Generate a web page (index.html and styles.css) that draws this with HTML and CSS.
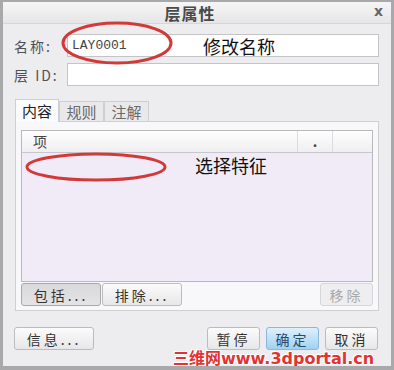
FILE: index.html
```html
<!DOCTYPE html>
<html lang="zh-CN">
<head>
  <meta charset="UTF-8" />
  <title>层属性</title>
  <link rel="stylesheet" href="styles.css">
</head>
<body>
  <div class="dialog">
    <div class="titlebar">
      <span class="title">层属性</span>
      <span class="close">x</span>
    </div>

    <div class="body">
      <div class="field">
        <label>名称:</label>
        <div class="input mono">LAY0001</div>
      </div>
      <div class="field">
        <label>层 ID:</label>
        <div class="input"></div>
      </div>

      <div class="tabs">
        <div class="tab active">内容</div>
        <div class="tab">规则</div>
        <div class="tab">注解</div>
      </div>
      <div class="panel">
        <div class="list">
          <div class="list-head">
            <div class="col col-item">项</div>
            <div class="col col-dot">.</div>
            <div class="col col-rest"></div>
          </div>
          <div class="list-rows"></div>
        </div>
        <div class="panel-buttons">
          <button class="btn pressed">包括...</button>
          <button class="btn">排除...</button>
          <span class="spacer"></span>
          <button class="btn disabled small">移除</button>
        </div>
      </div>

      <div class="footer">
        <button class="btn">信息...</button>
        <span class="spacer"></span>
        <button class="btn small">暂停</button>
        <button class="btn small primary">确定</button>
        <button class="btn small">取消</button>
      </div>
    </div>

    <!-- annotations drawn over the screenshot -->
    <svg class="marks" width="394" height="370" viewBox="0 0 394 370">
      <ellipse cx="117" cy="43" rx="54" ry="20" fill="none" stroke="#d23a3a" stroke-width="3"/>
      <ellipse cx="96" cy="167" rx="69" ry="13" fill="none" stroke="#d23a3a" stroke-width="3"/>
    </svg>
    <span class="note note-name">修改名称</span>
    <span class="note note-feat">选择特征</span>
    <span class="watermark">三维网www.3dportal.cn</span>
  </div>
</body>
</html>
```

FILE: styles.css
```css
body {
  margin: 0;
  background: #fff;
  font-family: "Noto Sans CJK SC", "Noto Sans", sans-serif;
}
.dialog {
  position: relative;
  width: 394px;
  height: 370px;
  box-sizing: border-box;
  border: 3px solid #a9a9ab;
  border-top-width: 2px;
  border-bottom-width: 4px;
  background: #ededf0;
  overflow: hidden;
}
.titlebar {
  height: 21px;
  display: flex;
  align-items: center;
  justify-content: center;
  position: relative;
  background: linear-gradient(#f6f6f6, #e6e6e8);
  border-bottom: 1px solid #d6d6d8;
}
.title {
  font-size: 16px;
  font-weight: bold;
  color: #4a4a4a;
  margin-right: 14px;
  letter-spacing: 1px;
}
.close {
  position: absolute;
  right: 8px;
  top: 1px;
  font-family: "DejaVu Sans", sans-serif;
  font-weight: bold;
  font-size: 14px;
  color: #666;
}
.body {
  padding: 10px 11px 0 11px;
}
.field {
  display: flex;
  align-items: center;
  height: 23px;
  margin-bottom: 6px;
}
.field label {
  width: 53px;
  font-size: 14px;
  color: #505050;
  letter-spacing: 2px;
}
.input {
  flex: 1;
  height: 21px;
  background: #fff;
  border: 1px solid #c4c4c6;
  margin-right: 1px;
  font-size: 13px;
  line-height: 21px;
  padding-left: 4px;
  color: #444;
}
.mono {
  font-family: "Liberation Mono", monospace;
}
.tabs {
  display: flex;
  margin-top: 13px;
  margin-left: 1px;
  height: 22px;
}
.tab {
  width: 45px;
  box-sizing: border-box;
  border: 1px solid #cfcfd2;
  border-bottom: none;
  background: #e9e9ec;
  font-size: 15px;
  color: #6a6a6a;
  text-align: center;
  line-height: 20px;
  margin-top: 2px;
}
.tab.active {
  width: 44px;
  background: #fbfbfd;
  color: #222;
  margin-top: 0;
  line-height: 22px;
  position: relative;
  z-index: 1;
  height: 23px;
}
.panel {
  margin-left: 1px;
  margin-right: 1px;
  height: 190px;
  box-sizing: border-box;
  background: #f8f8fa;
  border: 1px solid #cfcfd2;
  padding: 8px 5px 0 5px;
}
.list {
  height: 152px;
  box-sizing: border-box;
  border: 1px solid #b9b9bc;
  background: #f0ebf6;
  display: flex;
  flex-direction: column;
}
.list-head {
  display: flex;
  height: 21px;
  background: linear-gradient(#fefefe, #efeff1);
  border-bottom: 1px solid #c8c8cc;
  font-size: 14px;
  color: #444;
}
.col {
  line-height: 21px;
  box-sizing: border-box;
}
.col-item {
  width: 276px;
  padding-left: 11px;
  border-right: 1px solid #dcdcde;
}
.col-dot {
  width: 35px;
  text-align: center;
  font-weight: bold;
  border-right: 1px solid #dcdcde;
}
.col-rest {
  flex: 1;
}
.list-rows {
  flex: 1;
}
.panel-buttons {
  display: flex;
  gap: 1px;
  margin-top: 1px;
}
.spacer {
  flex: 1;
}
.btn {
  height: 23px;
  width: 80px;
  box-sizing: border-box;
  border: 1px solid #bcbcbf;
  border-radius: 3px;
  background: linear-gradient(#fbfbfb, #e7e7e9);
  font-family: "Noto Sans CJK SC", sans-serif;
  font-size: 14px;
  color: #333;
  padding: 0;
  letter-spacing: 3px;
  line-height: 20px;
}
.btn.small {
  width: 53px;
}
.btn.pressed {
  background: linear-gradient(#d9d9db, #e4e4e6);
  border-color: #a9a9ac;
}
.btn.disabled {
  color: #a8a8a8;
  background: #eeeef0;
  border-color: #d6d6d8;
}
.btn.primary {
  background: linear-gradient(#dff0fb, #9fd2f3);
  border-color: #8bb8d8;
  color: #2a4a66;
}
.footer {
  display: flex;
  gap: 6px;
  margin-top: 16px;
  margin-right: 2px;
}
.marks {
  position: absolute;
  left: -3px;
  top: -2px;
  pointer-events: none;
}
.note {
  position: absolute;
  font-size: 18px;
  color: #111;
}
.note-name {
  left: 200px;
  top: 31px;
}
.note-feat {
  left: 192px;
  top: 150px;
}
.watermark {
  position: absolute;
  left: 170px;
  top: 343px;
  font-family: "DejaVu Sans", "Noto Sans CJK SC", sans-serif;
  font-weight: bold;
  font-size: 16px;
  color: #e23333;
  letter-spacing: 0;
  text-shadow: 1px 0 #fff, -1px 0 #fff, 0 1px #fff, 0 -1px #fff, 1px 1px #fff, -1px -1px #fff;
}
```
